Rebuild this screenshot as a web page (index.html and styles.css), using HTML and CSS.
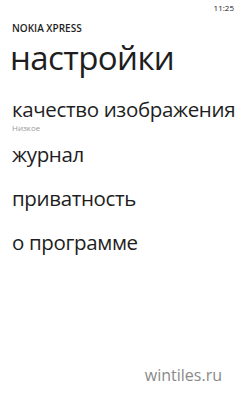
FILE: index.html
```html
<!DOCTYPE html>
<html>
<head>
<meta charset="utf-8">
<link rel="stylesheet" href="styles.css">
</head>
<body>
<div class="screen">
  <div class="status"><span class="time">11:25</span></div>
  <div class="app">NOKIA XPRESS</div>
  <div class="title">настройки</div>
  <ul class="menu">
    <li class="item first"><div class="label">качество изображения</div><div class="sub">Низкое</div></li>
    <li class="item"><div class="label">журнал</div></li>
    <li class="item"><div class="label">приватность</div></li>
    <li class="item"><div class="label">о программе</div></li>
  </ul>
  <div class="watermark">wintiles.ru</div>
</div>
</body>
</html>
```
FILE: styles.css
```css
html, body { margin: 0; padding: 0; background: #fff; }
body { font-family: "Open Sans", "Noto Sans", sans-serif; color: #1e1e1e; }
.screen { position: relative; width: 240px; height: 400px; overflow: hidden; }
.status { height: 16px; display: flex; justify-content: flex-end; padding-right: 6px; }
.time { font-size: 8px; line-height: 16px; color: #222; }
.app { margin-top: 5px; padding-left: 12px; font-size: 10px; line-height: 14px; font-weight: 600; }
.title { padding-left: 10px; font-size: 33px; line-height: 40px; margin-top: 3px; letter-spacing: -0.6px; white-space: nowrap; }
.menu { list-style: none; margin: 16px 0 0; padding: 0 0 0 12px; }
.item { margin-bottom: 14px; }
.item.first { margin-bottom: 5px; }
.label { font-size: 20.5px; line-height: 30px; letter-spacing: -0.35px; white-space: nowrap; }
.sub { font-size: 8px; line-height: 12px; color: #999; margin-top: -2px; }
.watermark { position: absolute; right: 18px; bottom: 14px; font-size: 16px; color: #8a8a8a; }
```
